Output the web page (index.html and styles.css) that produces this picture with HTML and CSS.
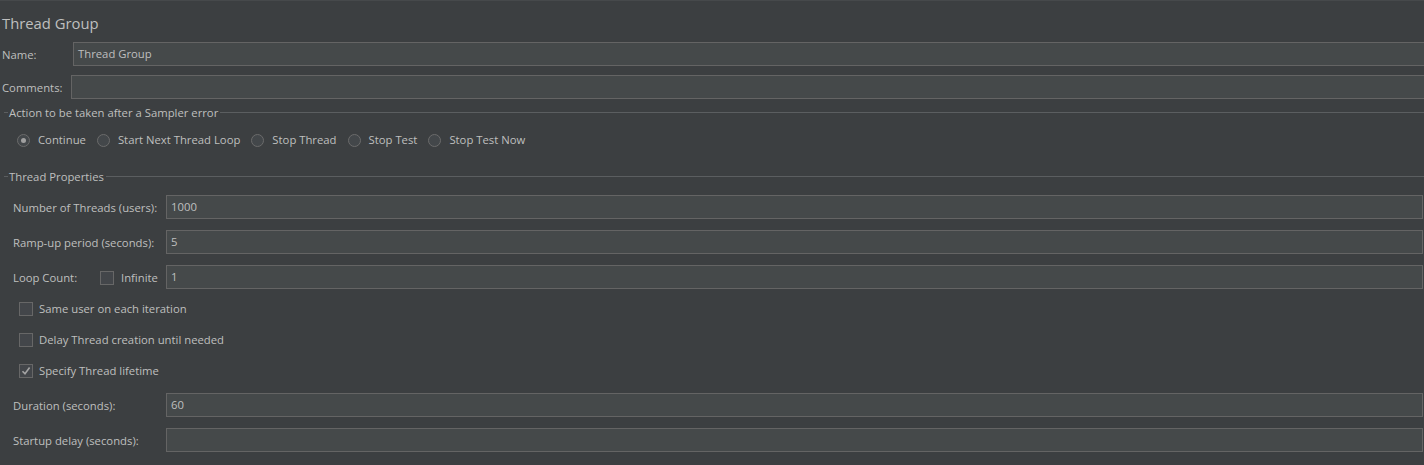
FILE: index.html
```html
<!DOCTYPE html>
<html>
<head>
<meta charset="utf-8">
<link rel="stylesheet" href="styles.css">
</head>
<body>
<div class="page">
  <div class="title">Thread Group</div>
  <div class="row name-row">
    <label class="lbl-name">Name:</label>
    <div class="field open">Thread Group</div>
  </div>
  <div class="row comments-row">
    <label class="lbl-comments">Comments:</label>
    <div class="field open"></div>
  </div>

  <div class="group-head g1">
    <span class="tick"></span><span class="legend">Action to be taken after a Sampler error</span><span class="rule"></span>
  </div>
  <div class="radios">
    <div class="radio-item"><span class="radio on"></span><span>Continue</span></div>
    <div class="radio-item"><span class="radio"></span><span>Start Next Thread Loop</span></div>
    <div class="radio-item"><span class="radio"></span><span>Stop Thread</span></div>
    <div class="radio-item"><span class="radio"></span><span>Stop Test</span></div>
    <div class="radio-item"><span class="radio"></span><span>Stop Test Now</span></div>
  </div>

  <div class="group-head g2">
    <span class="tick"></span><span class="legend">Thread Properties</span><span class="rule"></span>
  </div>
  <div class="props">
    <div class="prow">
      <label class="plabel">Number of Threads (users):</label>
      <div class="field">1000</div>
    </div>
    <div class="prow">
      <label class="plabel">Ramp-up period (seconds):</label>
      <div class="field">5</div>
    </div>
    <div class="prow">
      <div class="plabel loop">
        <span class="loop-text">Loop Count:</span>
        <span class="check"></span><span class="inf">Infinite</span>
      </div>
      <div class="field">1</div>
    </div>
    <div class="checks">
      <div class="crow"><span class="check"></span><span>Same user on each iteration</span></div>
      <div class="crow"><span class="check"></span><span>Delay Thread creation until needed</span></div>
      <div class="crow"><span class="check checked"><svg viewBox="0 0 14 14" width="14" height="14"><path d="M3.5 7.2 L6 9.8 L10.6 3.6" fill="none" stroke="#a4a4a4" stroke-width="1.6"/></svg></span><span>Specify Thread lifetime</span></div>
    </div>
    <div class="prow dur">
      <label class="plabel">Duration (seconds):</label>
      <div class="field">60</div>
    </div>
    <div class="prow">
      <label class="plabel">Startup delay (seconds):</label>
      <div class="field"></div>
    </div>
  </div>
</div>
</body>
</html>
```

FILE: styles.css
```css
html, body {
  margin: 0;
  padding: 0;
  background: #3c3f41;
}
body {
  font-family: "Open Sans", "Noto Sans", sans-serif;
  font-size: 11.3px;
  color: #bfbfbf;
  overflow: hidden;
  height: 465px;
  white-space: nowrap;
}
.page {
  border-top: 1px solid #46494b;
  display: flex;
  flex-direction: column;
}
.title {
  font-size: 14.8px;
  line-height: 20px;
  height: 20px;
  margin-top: 12px;
  padding-left: 2px;
}
.row {
  display: flex;
  align-items: center;
  height: 24px;
}
.name-row { margin-top: 9px; }
.comments-row { margin-top: 9px; }
.lbl-name { width: 71px; padding-left: 2px; flex: none; }
.lbl-comments { width: 69px; padding-left: 2px; flex: none; }
.field {
  flex: 1;
  height: 24px;
  box-sizing: border-box;
  background: #45494a;
  border: 1px solid #646464;
  padding-left: 4px;
  line-height: 22px;
  color: #bfbfbf;
}
.field.open { border-right: none; margin-right: -2px; }

.group-head {
  display: flex;
  align-items: center;
  height: 16px;
  margin-left: 4px;
}
.g1 { margin-top: 5px; }
.g2 { margin-top: 20px; }
.tick { width: 4px; height: 1px; background: #5b5e60; flex: none; }
.legend { padding: 0 2px 0 1px; line-height: 16px; position: relative; top: 1px; }
.rule { flex: 1; height: 1px; background: #5b5e60; }

.radios {
  display: flex;
  align-items: center;
  height: 16px;
  margin-top: 11px;
  margin-bottom: 1px;
  padding-left: 17px;
  gap: 11px;
}
.radio-item { display: flex; align-items: center; gap: 8px; }
.radio {
  width: 13px;
  height: 13px;
  box-sizing: border-box;
  border: 1px solid #6b6b6b;
  border-radius: 50%;
  background: #43474a;
  display: flex;
  align-items: center;
  justify-content: center;
  position: relative;
  top: 1px;
}
.radio.on::after {
  content: "";
  width: 5px;
  height: 5px;
  border-radius: 50%;
  background: #a0a0a0;
}

.props {
  display: flex;
  flex-direction: column;
  padding-left: 13px;
  padding-right: 1px;
  margin-top: 11px;
}
.prow {
  display: flex;
  align-items: center;
  height: 24px;
  margin-bottom: 11px;
}
.plabel { width: 153px; flex: none; }
.loop { display: flex; align-items: center; }
.loop-text { width: 87px; }
.inf { margin-left: 7px; }
.check {
  width: 14px;
  height: 14px;
  box-sizing: border-box;
  border: 1px solid #676767;
  background: #43464a;
  flex: none;
  display: inline-flex;
  position: relative;
  top: 1px;
}
.check svg { position: absolute; left: -1px; top: -1px; }
.checks {
  display: flex;
  flex-direction: column;
  gap: 15px;
  margin-top: 0;
  padding-left: 6px;
}
.crow { display: flex; align-items: center; gap: 6px; height: 16px; }
.dur { margin-top: 15px; }
```
